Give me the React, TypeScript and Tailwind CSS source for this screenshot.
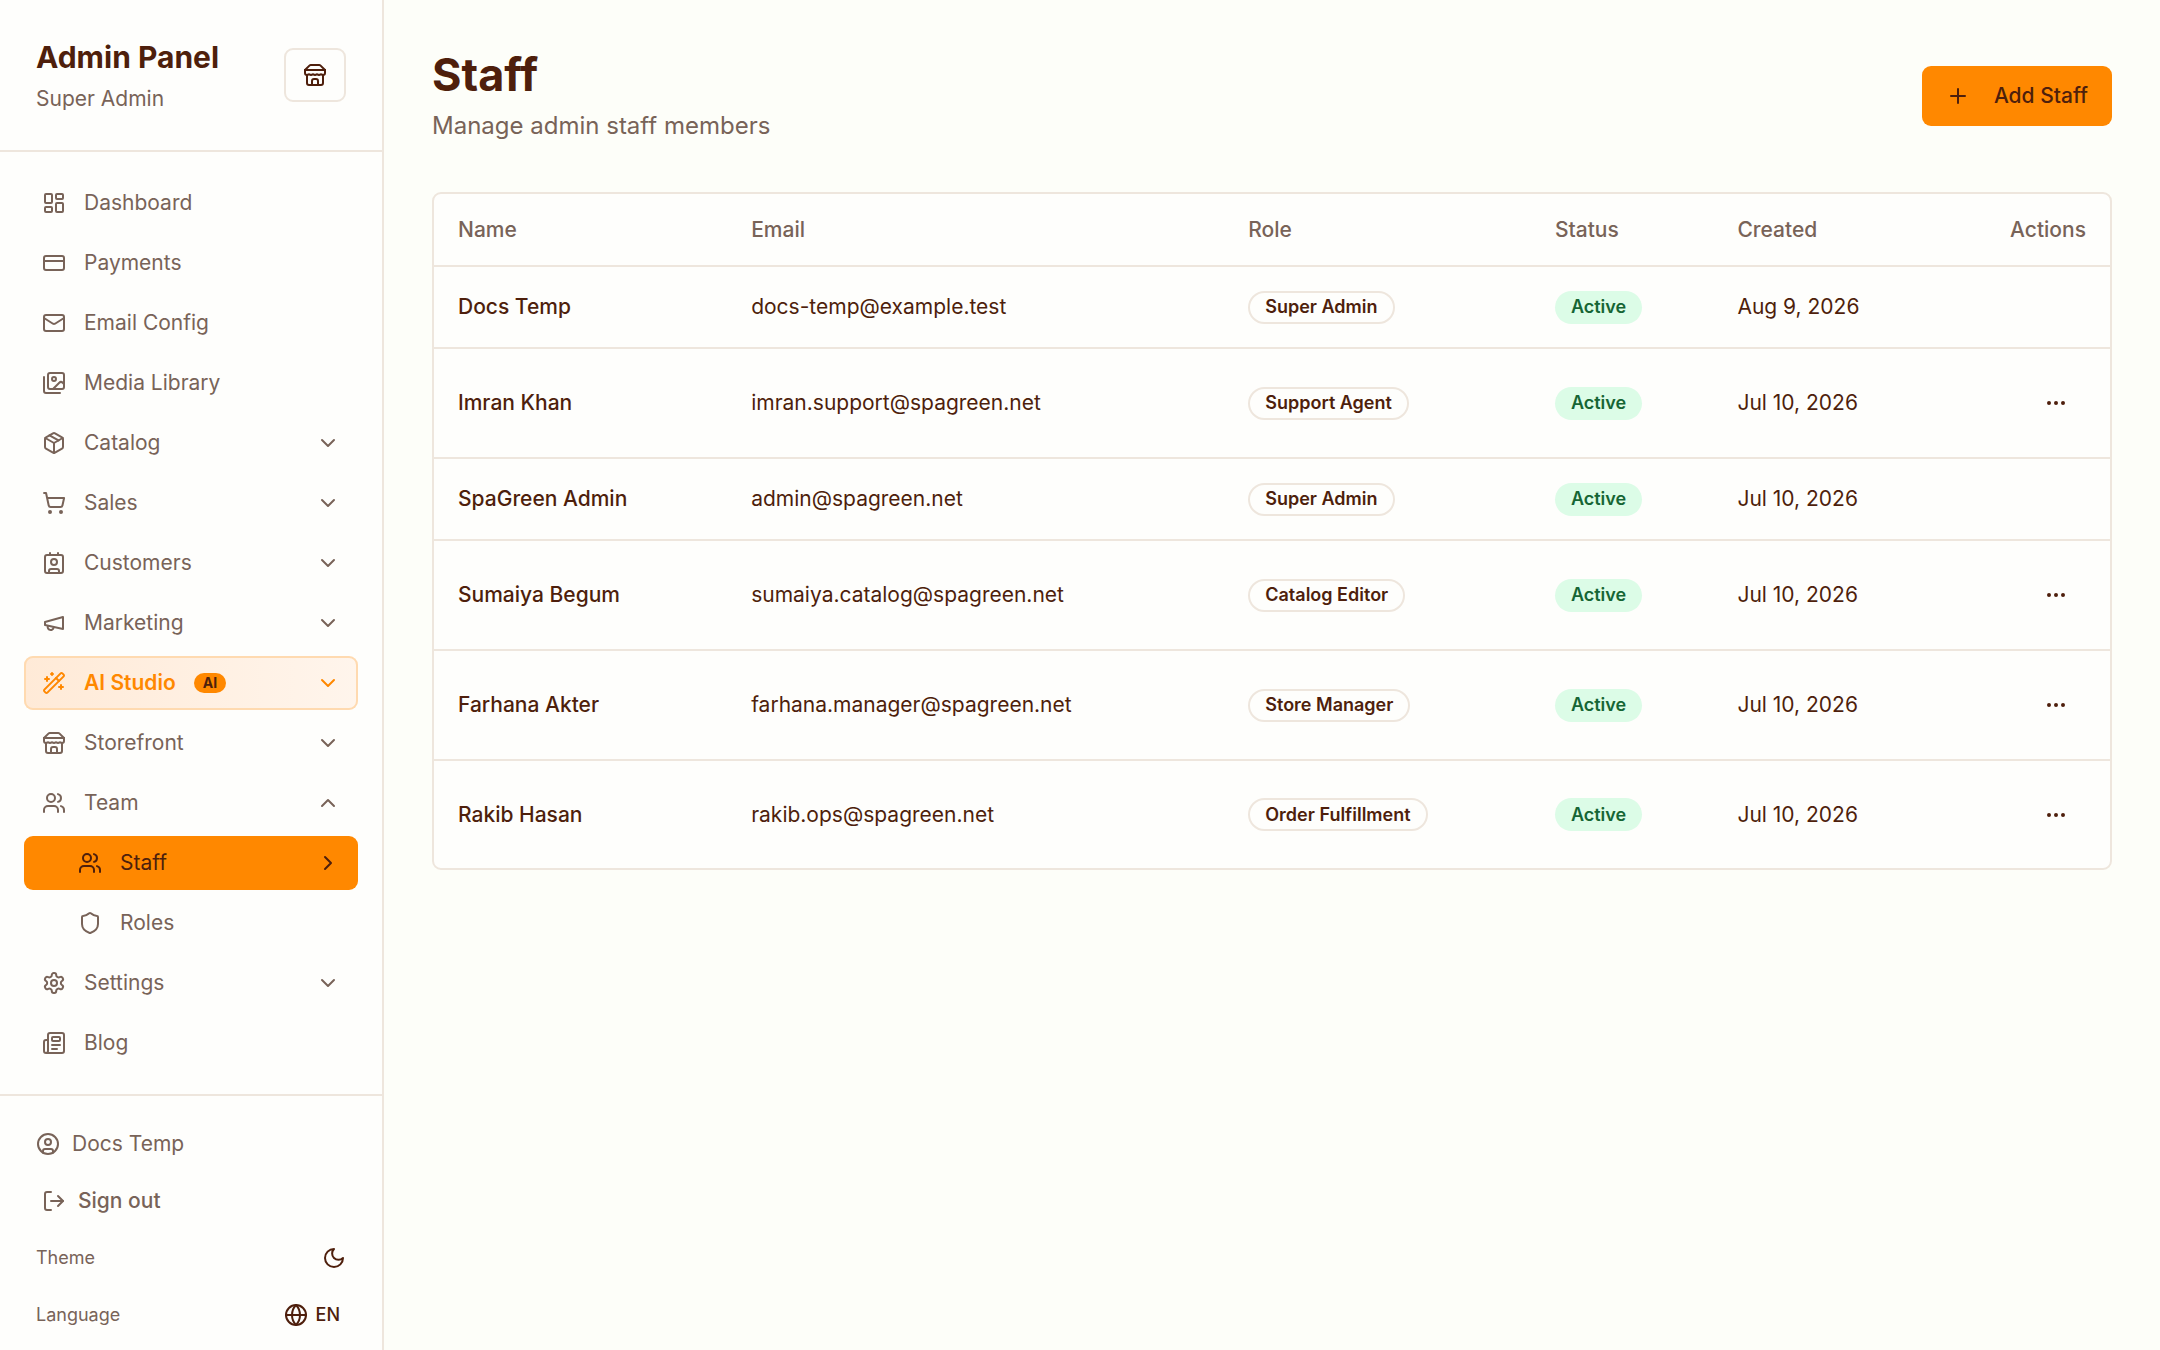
import { useState, type ComponentType, type SVGProps } from 'react';
import {
  ChevronDown,
  ChevronRight,
  ChevronUp,
  CircleUser,
  CreditCard,
  Ellipsis,
  Globe,
  LayoutDashboard,
  LogOut,
  Mail,
  Newspaper,
  Package,
  Plus,
  Shield,
  ShoppingCart,
  Users,
  WandSparkles,
} from 'lucide-react';

type IconProps = SVGProps<SVGSVGElement>;
type Icon = ComponentType<{ className?: string }>;

const Svg = ({ children, ...props }: IconProps) => (
  <svg viewBox="0 0 24 24" fill="none" stroke="currentColor" strokeWidth={2} strokeLinecap="round" strokeLinejoin="round" aria-hidden="true" {...props}>
    {children}
  </svg>
);

const StoreIcon = ({ className }: { className?: string }) => (
  <Svg className={className}>
    <path d="m2 7 4.41-4.41A2 2 0 0 1 7.83 2h8.34a2 2 0 0 1 1.42.59L22 7" />
    <path d="M4 12v8a2 2 0 0 0 2 2h12a2 2 0 0 0 2-2v-8" />
    <path d="M15 22v-4a2 2 0 0 0-2-2h-2a2 2 0 0 0-2 2v4" />
    <path d="M2 7h20" />
    <path d="M22 7v3a2 2 0 0 1-2 2a2.7 2.7 0 0 1-1.59-.63.7.7 0 0 0-.82 0A2.7 2.7 0 0 1 16 12a2.7 2.7 0 0 1-1.59-.63.7.7 0 0 0-.82 0A2.7 2.7 0 0 1 12 12a2.7 2.7 0 0 1-1.59-.63.7.7 0 0 0-.82 0A2.7 2.7 0 0 1 8 12a2.7 2.7 0 0 1-1.59-.63.7.7 0 0 0-.82 0A2.7 2.7 0 0 1 4 12a2 2 0 0 1-2-2V7" />
  </Svg>
);

const ImagesIcon = ({ className }: { className?: string }) => (
  <Svg className={className}>
    <path d="M18 22H4a2 2 0 0 1-2-2V6" />
    <path d="m22 13-1.296-1.296a2.41 2.41 0 0 0-3.408 0L11 18" />
    <circle cx="12" cy="8" r="2" />
    <rect width="16" height="16" x="6" y="2" rx="2" />
  </Svg>
);

const ContactIcon = ({ className }: { className?: string }) => (
  <Svg className={className}>
    <path d="M16 2v2" />
    <path d="M7 22v-2a2 2 0 0 1 2-2h6a2 2 0 0 1 2 2v2" />
    <path d="M8 2v2" />
    <circle cx="12" cy="11" r="3" />
    <rect x="3" y="4" width="18" height="18" rx="2" />
  </Svg>
);

const MegaphoneIcon = ({ className }: { className?: string }) => (
  <Svg className={className}>
    <path d="m3 11 18-5v12L3 14v-3z" />
    <path d="M11.6 16.8a3 3 0 1 1-5.8-1.6" />
  </Svg>
);

const SettingsIcon = ({ className }: { className?: string }) => (
  <Svg className={className}>
    <path d="M12.22 2h-.44a2 2 0 0 0-2 2v.18a2 2 0 0 1-1 1.73l-.43.25a2 2 0 0 1-2 0l-.15-.08a2 2 0 0 0-2.73.73l-.22.38a2 2 0 0 0 .73 2.73l.15.1a2 2 0 0 1 1 1.72v.51a2 2 0 0 1-1 1.74l-.15.09a2 2 0 0 0-.73 2.73l.22.38a2 2 0 0 0 2.73.73l.15-.08a2 2 0 0 1 2 0l.43.25a2 2 0 0 1 1 1.73V20a2 2 0 0 0 2 2h.44a2 2 0 0 0 2-2v-.18a2 2 0 0 1 1-1.73l.43-.25a2 2 0 0 1 2 0l.15.08a2 2 0 0 0 2.73-.73l.22-.39a2 2 0 0 0-.73-2.73l-.15-.08a2 2 0 0 1-1-1.74v-.5a2 2 0 0 1 1-1.74l.15-.09a2 2 0 0 0 .73-2.73l-.22-.38a2 2 0 0 0-2.73-.73l-.15.08a2 2 0 0 1-2 0l-.43-.25a2 2 0 0 1-1-1.73V4a2 2 0 0 0-2-2z" />
    <circle cx="12" cy="12" r="3" />
  </Svg>
);

const MoonIcon = ({ className }: { className?: string }) => (
  <Svg className={className}>
    <path d="M12 3a6 6 0 0 0 9 9 9 9 0 1 1-9-9Z" />
  </Svg>
);

interface NavLink {
  label: string;
  icon: Icon;
  children?: NavLink[];
  highlight?: boolean;
}

const navLinks: NavLink[] = [
  { label: 'Dashboard', icon: LayoutDashboard },
  { label: 'Payments', icon: CreditCard },
  { label: 'Email Config', icon: Mail },
  { label: 'Media Library', icon: ImagesIcon },
  { label: 'Catalog', icon: Package, children: [] },
  { label: 'Sales', icon: ShoppingCart, children: [] },
  { label: 'Customers', icon: ContactIcon, children: [] },
  { label: 'Marketing', icon: MegaphoneIcon, children: [] },
  { label: 'AI Studio', icon: WandSparkles, children: [], highlight: true },
  { label: 'Storefront', icon: StoreIcon, children: [] },
  {
    label: 'Team',
    icon: Users,
    children: [
      { label: 'Staff', icon: Users },
      { label: 'Roles', icon: Shield },
    ],
  },
  { label: 'Settings', icon: SettingsIcon, children: [] },
  { label: 'Blog', icon: Newspaper },
];

interface StaffMember {
  name: string;
  email: string;
  role: string;
  created: string;
}

const staff: StaffMember[] = [
  { name: 'Docs Temp', email: 'docs-temp@example.test', role: 'Super Admin', created: 'Aug 9, 2026' },
  { name: 'Imran Khan', email: 'imran.support@spagreen.net', role: 'Support Agent', created: 'Jul 10, 2026' },
  { name: 'SpaGreen Admin', email: 'admin@spagreen.net', role: 'Super Admin', created: 'Jul 10, 2026' },
  { name: 'Sumaiya Begum', email: 'sumaiya.catalog@spagreen.net', role: 'Catalog Editor', created: 'Jul 10, 2026' },
  { name: 'Farhana Akter', email: 'farhana.manager@spagreen.net', role: 'Store Manager', created: 'Jul 10, 2026' },
  { name: 'Rakib Hasan', email: 'rakib.ops@spagreen.net', role: 'Order Fulfillment', created: 'Jul 10, 2026' },
];

const navItemClass = 'flex h-[54px] w-full items-center gap-[18px] rounded-[9px] px-[18px] text-left';

const NavItem = ({ link, open, onToggle }: { link: NavLink; open: boolean; onToggle: () => void }) => {
  const LinkIcon = link.icon;

  if (!link.children) {
    return (
      <a href="#" className={navItemClass}>
        <LinkIcon className="size-6 shrink-0" />
        {link.label}
      </a>
    );
  }

  const Chevron = open ? ChevronUp : ChevronDown;

  return (
    <button
      type="button"
      onClick={onToggle}
      aria-expanded={open}
      className={`${navItemClass} ${
        link.highlight ? 'bg-gradient-to-r from-[#ffead7] to-[#fff5ec] font-semibold text-[#ff8800] inset-ring-2 inset-ring-[#ffdab0]' : ''
      }`}
    >
      <LinkIcon className="size-6 shrink-0" />
      <span className="flex flex-1 items-center gap-[18px]">
        {link.label}
        {link.highlight && (
          <span className="rounded-full bg-[#ff8800] px-[9px] text-[14px] leading-5 font-bold text-[#4e1f0c]">AI</span>
        )}
      </span>
      <Chevron className="size-6 shrink-0" />
    </button>
  );
};

const Sidebar = () => {
  const [openMenu, setOpenMenu] = useState('Team');

  return (
    <aside className="flex w-96 shrink-0 flex-col border-r-2 border-[#eee6dd] bg-[#fefefc]">
      <div className="flex items-center justify-between border-b-2 border-[#eee6dd] p-9">
        <div>
          <h2 className="text-[30px] leading-[42px] font-bold">Admin Panel</h2>
          <p className="mt-1.5 text-[21px] leading-[30px] text-[#786358]">Super Admin</p>
        </div>
        <a href="#" aria-label="View storefront" className="flex h-[54px] items-center rounded-[9px] border-2 border-[#eee6dd] px-[17px]">
          <StoreIcon className="size-6" />
        </a>
      </div>

      <nav className="flex flex-1 flex-col gap-1.5 p-6 text-[21px] leading-[30px] text-[#786358]">
        {navLinks.map(link => {
          const open = openMenu === link.label;

          return (
            <div key={link.label} className="flex flex-col gap-1.5">
              <NavItem link={link} open={open} onToggle={() => setOpenMenu(open ? '' : link.label)} />
              {open &&
                link.children?.map(child => {
                  const ChildIcon = child.icon;
                  const active = child.label === 'Staff';

                  return (
                    <a
                      key={child.label}
                      href="#"
                      aria-current={active ? 'page' : undefined}
                      className={`flex h-[54px] items-center gap-[18px] rounded-[9px] pr-[18px] pl-[54px] ${active ? 'bg-[#ff8800] text-[#4e1f0c]' : ''}`}
                    >
                      <ChildIcon className="size-6 shrink-0" />
                      <span className="flex-1">{child.label}</span>
                      {active && <ChevronRight className="size-6" />}
                    </a>
                  );
                })}
            </div>
          );
        })}
      </nav>

      <div className="flex flex-col gap-[9px] border-t-2 border-[#eee6dd] px-9 pt-6 pb-[11px] text-[#786358]">
        <div className="flex h-12 items-center gap-3 text-[21px] leading-[30px]">
          <CircleUser className="size-6" />
          Docs Temp
        </div>
        <button type="button" className="flex h-12 items-center gap-3 px-1.5 text-[21px] leading-[30px] font-medium">
          <LogOut className="size-6" />
          Sign out
        </button>
        <div className="flex h-12 items-center justify-between text-[18px] leading-6">
          Theme
          <button type="button" aria-label="Toggle theme" className="text-[#4e1f0c]">
            <MoonIcon className="size-6" />
          </button>
        </div>
        <div className="flex h-12 items-center justify-between text-[18px] leading-6">
          Language
          <button type="button" className="flex items-center gap-2 pr-1.5 font-medium text-[#4e1f0c]">
            <Globe className="size-6" />
            EN
          </button>
        </div>
      </div>
    </aside>
  );
};

const StaffTable = () => (
  <div className="overflow-hidden rounded-[9px] border-2 border-[#eee6dd] bg-[#fefefc]">
    <table className="w-full text-[21px] leading-[30px]">
      <thead>
        <tr className="h-[72px] border-b-2 border-[#eee6dd] text-left text-[#786358]">
          <th className="px-6 font-medium">Name</th>
          <th className="px-6 font-medium">Email</th>
          <th className="px-6 font-medium">Role</th>
          <th className="px-6 font-medium">Status</th>
          <th className="px-6 font-medium">Created</th>
          <th className="px-6 text-right font-medium">Actions</th>
        </tr>
      </thead>
      <tbody>
        {staff.map(member => {
          const editable = member.role !== 'Super Admin';

          return (
            <tr key={member.email} className={`border-[#eee6dd] not-last:border-b-2 ${editable ? 'h-[110px] last:h-[108px]' : 'h-[82px]'}`}>
              <td className="px-6 font-medium">{member.name}</td>
              <td className="px-6">{member.email}</td>
              <td className="px-6">
                <span className="inline-flex h-[33px] items-center rounded-full border-2 border-[#eee6dd] px-[15px] align-middle text-[18px] leading-6 font-semibold">
                  {member.role}
                </span>
              </td>
              <td className="px-6">
                <span className="inline-flex h-[33px] items-center rounded-full bg-[#dcfce7] px-4 align-middle text-[18px] leading-6 font-semibold text-[#166534]">
                  Active
                </span>
              </td>
              <td className="px-6">{member.created}</td>
              <td className="px-6 text-right">
                {editable && (
                  <button type="button" aria-label={`Actions for ${member.name}`} className="inline-flex size-[60px] items-center justify-center align-middle">
                    <Ellipsis className="size-6" />
                  </button>
                )}
              </td>
            </tr>
          );
        })}
      </tbody>
    </table>
  </div>
);

export default function App() {
  return (
    <div className="flex min-h-screen bg-[#fdfef9] font-['Inter',sans-serif] text-[#4e1f0c]">
      <Sidebar />
      <main className="flex min-w-0 flex-1 flex-col gap-12 p-12">
        <div className="flex items-center justify-between">
          <div>
            <h1 className="text-[45px] leading-[54px] font-bold">Staff</h1>
            <p className="mt-1.5 text-[24px] leading-9 text-[#786358]">Manage admin staff members</p>
          </div>
          <button type="button" className="flex h-[60px] items-center gap-6 rounded-[9px] bg-[#ff8800] px-6 text-[21px] leading-[30px] font-medium">
            <Plus className="size-6" />
            Add Staff
          </button>
        </div>
        <StaffTable />
      </main>
    </div>
  );
}
